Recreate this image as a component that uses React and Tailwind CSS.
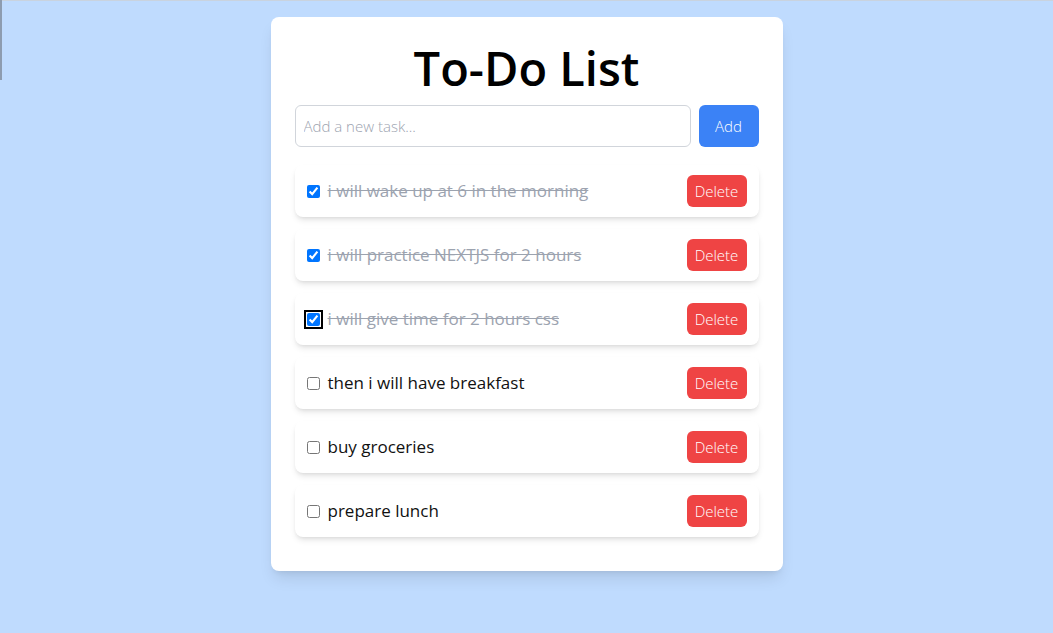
import { useState } from 'react';

const initialTasks = [
  { id: 1, text: 'i will wake up at 6 in the morning', done: true },
  { id: 2, text: 'i will practice NEXTJS for 2 hours', done: true },
  { id: 3, text: 'i will give time for 2 hours css', done: true, focused: true },
  { id: 4, text: 'then i will have breakfast', done: false },
  { id: 5, text: 'buy groceries', done: false },
  { id: 6, text: 'prepare lunch', done: false },
];

const TodoItem = ({ task, onToggle, onDelete }) => {
  return (
    <li className="flex items-center justify-between bg-white rounded-lg shadow-md px-3 py-2.5">
      <div className="flex items-center gap-2">
        <input
          type="checkbox"
          checked={task.done}
          onChange={() => onToggle(task.id)}
          className={`w-[13px] h-[13px] accent-[#0075ff] ${task.focused ? 'outline-2 outline-offset-1 outline-black rounded-[2px]' : ''}`}
        />
        <span className={`text-[17px] ${task.done ? 'line-through text-[#9ca3af]' : 'text-[#111]'}`}>
          {task.text}
        </span>
      </div>
      <button
        onClick={() => onDelete(task.id)}
        className="bg-[#ef4444] text-white text-[15px] font-light rounded-md w-[60px] h-8"
      >
        Delete
      </button>
    </li>
  );
};

export default function App() {
  const [tasks, setTasks] = useState(initialTasks);
  const [input, setInput] = useState('');

  const toggle = (id) => setTasks(tasks.map(t => (t.id === id ? { ...t, done: !t.done } : t)));
  const remove = (id) => setTasks(tasks.filter(t => t.id !== id));
  const add = () => {
    if (!input.trim()) return;
    setTasks([...tasks, { id: Date.now(), text: input.trim(), done: false }]);
    setInput('');
  };

  return (
    <div className="relative min-h-screen bg-[#bfdbfe] pt-[17px] font-['Open_Sans',sans-serif]">
      {/* window edge artifacts */}
      <div className="absolute top-0 left-0 right-0 h-px bg-[#c9d3df]"></div>
      <div className="absolute top-0 left-0 w-[2px] h-[80px] bg-[#8d9cb0]"></div>

      <div className="mx-auto w-[512px] bg-white rounded-lg shadow-lg p-6 pb-[34px]">
        <h1 className="text-center text-[47px] leading-none font-semibold text-black mt-[4px] mb-[13px]">
          To-Do List
        </h1>
        <div className="flex gap-2 mb-[18px]">
          <input
            value={input}
            onChange={(e) => setInput(e.target.value)}
            placeholder="Add a new task..."
            className="flex-1 h-[42px] border border-[#d1d5db] rounded-md px-2 text-[15px] font-light placeholder:text-[#9ca3af] outline-none"
          />
          <button onClick={add} className="bg-[#3b82f6] text-white text-[15px] font-light rounded-md w-[60px] h-[42px]">
            Add
          </button>
        </div>
        <ul className="flex flex-col gap-3">
          {tasks.map(task => (
            <TodoItem key={task.id} task={task} onToggle={toggle} onDelete={remove} />
          ))}
        </ul>
      </div>
    </div>
  );
}
